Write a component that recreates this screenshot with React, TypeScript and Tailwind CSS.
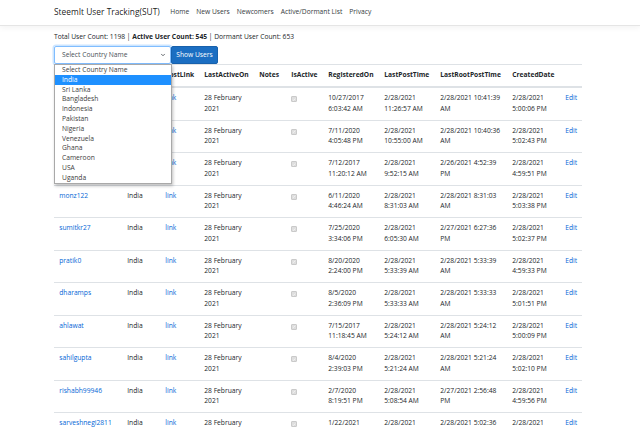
import { ChevronDown } from 'lucide-react';

type Row = {
  name: string;
  registered: string;
  lastPost: string;
  lastRoot: string;
  created: string;
};

const rows: Row[] = [
  { name: 'amitsharma', registered: '10/27/2017 6:03:42 AM', lastPost: '2/28/2021 11:26:57 AM', lastRoot: '2/28/2021 10:41:39 AM', created: '2/28/2021 5:00:06 PM' },
  { name: 'bhattg', registered: '7/11/2020 4:05:48 PM', lastPost: '2/28/2021 10:55:00 AM', lastRoot: '2/28/2021 10:40:36 AM', created: '2/28/2021 5:02:43 PM' },
  { name: 'rajeshkr', registered: '7/12/2017 11:20:12 AM', lastPost: '2/28/2021 9:52:15 AM', lastRoot: '2/26/2021 4:52:39 PM', created: '2/28/2021 4:59:51 PM' },
  { name: 'monz122', registered: '6/11/2020 4:46:24 AM', lastPost: '2/28/2021 8:31:03 AM', lastRoot: '2/28/2021 8:31:03 AM', created: '2/28/2021 5:03:38 PM' },
  { name: 'sumitkr27', registered: '7/25/2020 3:34:06 PM', lastPost: '2/28/2021 6:05:30 AM', lastRoot: '2/27/2021 6:27:36 PM', created: '2/28/2021 5:02:37 PM' },
  { name: 'pratik0', registered: '8/20/2020 2:24:00 PM', lastPost: '2/28/2021 5:33:39 AM', lastRoot: '2/28/2021 5:33:39 AM', created: '2/28/2021 4:59:33 PM' },
  { name: 'dharamps', registered: '8/5/2020 2:36:09 PM', lastPost: '2/28/2021 5:33:33 AM', lastRoot: '2/28/2021 5:33:33 AM', created: '2/28/2021 5:01:51 PM' },
  { name: 'ahlawat', registered: '7/15/2017 11:18:45 AM', lastPost: '2/28/2021 5:24:12 AM', lastRoot: '2/28/2021 5:24:12 AM', created: '2/28/2021 5:00:09 PM' },
  { name: 'sahilgupta', registered: '8/4/2020 2:39:03 PM', lastPost: '2/28/2021 5:21:24 AM', lastRoot: '2/28/2021 5:21:24 AM', created: '2/28/2021 5:02:10 PM' },
  { name: 'rishabh99946', registered: '2/7/2020 8:19:51 PM', lastPost: '2/28/2021 5:08:54 AM', lastRoot: '2/27/2021 2:56:48 PM', created: '2/28/2021 4:59:56 PM' },
  { name: 'sarveshnegi2811', registered: '1/22/2021 3:12:40 PM', lastPost: '2/28/2021 5:02:36 AM', lastRoot: '2/28/2021 5:02:36 AM', created: '2/28/2021 5:01:18 PM' },
];

const countries = [
  'Select Country Name',
  'India',
  'Sri Lanka',
  'Bangladesh',
  'Indonesia',
  'Pakistan',
  'Nigeria',
  'Venezuela',
  'Ghana',
  'Cameroon',
  'USA',
  'Uganda',
];

const navLinks = ['Home', 'New Users', 'Newcomers', 'Active/Dormant List', 'Privacy'];

const headers = [
  'UserName',
  'Country',
  'PostLink',
  'LastActiveOn',
  'Notes',
  'IsActive',
  'RegisteredOn',
  'LastPostTime',
  'LastRootPostTime',
  'CreatedDate',
  '',
];

const widths = [68, 38, 39, 55, 32, 37, 56, 56, 72, 53, 22];

function Checkbox() {
  return (
    <span className="mt-[3px] flex h-[6px] w-[6px] items-center justify-center rounded-[1px] border border-[#cacaca] bg-[#dedede]">
      <svg viewBox="0 0 10 10" className="h-[5px] w-[5px]">
        <path d="M2 5.2 4.2 7.3 8 2.8" fill="none" stroke="#fafafa" strokeWidth="1.8" />
      </svg>
    </span>
  );
}

export default function App() {
  return (
    <div className="min-h-screen bg-white text-[#212529]" style={{ fontFamily: '"Open Sans", "Noto Sans", sans-serif' }}>
      <nav className="flex h-[26px] items-center border-b border-[#e5e5e5] bg-white pl-[54px] shadow-[0_2px_6px_rgba(0,0,0,0.05)]">
        <span className="mr-[7px] text-[8.4px] text-black/90">SteemIt User Tracking(SUT)</span>
        <ul className="flex">
          {navLinks.map((l) => (
            <li key={l} className="px-[3.5px] text-[6.7px] text-[#343a40]">
              {l}
            </li>
          ))}
        </ul>
      </nav>

      <main className="ml-[54px] w-[528px] pt-[6px]">
        <p className="text-[6.7px] leading-[10.5px]">
          Total User Count: 1198 | <b>Active User Count: 545</b> | Dormant User Count: 653
        </p>

        <div className="relative mt-[3.5px] flex">
          <div className="flex h-[18px] w-[117px] items-center justify-between rounded-[2px] border border-[#80bdff] pl-[7px] pr-[4px] text-[6.7px] text-[#495057] shadow-[0_0_0_1.5px_rgba(0,123,255,0.2)]">
            <span>Select Country Name</span>
            <ChevronDown size={6} strokeWidth={3} className="text-[#343a40]" />
          </div>
          <button className="h-[18px] w-[47px] rounded-[2px] border border-[#1861ac] bg-[#1b6ec2] text-[6.7px] text-white">
            Show Users
          </button>

          <ul className="absolute left-0 top-[18px] z-10 w-[118px] border border-[#a9a9a9] bg-white text-[6.7px] leading-[9.8px] shadow-[1px_2px_3px_rgba(0,0,0,0.25)]">
            {countries.map((c) => (
              <li key={c} className={c === 'India' ? 'bg-[#1e90ff] pl-[7px] text-white' : 'pl-[7px] text-[#3c3c3c]'}>
                {c}
              </li>
            ))}
          </ul>
        </div>

        <table className="w-[528px] table-fixed border-collapse text-[6.7px] leading-[10.5px]">
          <colgroup>
            {widths.map((w, i) => (
              <col key={i} style={{ width: w }} />
            ))}
          </colgroup>
          <thead>
            <tr>
              {headers.map((h, i) => (
                <th key={i} className="border-t border-b-2 border-[#dee2e6] px-[5.25px] py-[5.25px] text-left font-bold whitespace-nowrap">
                  {h}
                </th>
              ))}
            </tr>
          </thead>
          <tbody>
            {rows.map((r) => (
              <tr key={r.name} className="border-b border-[#dee2e6] align-top">
                <td className="px-[5.25px] py-[5.25px] text-[#0366d6]">{r.name}</td>
                <td className="px-[5.25px] py-[5.25px]">India</td>
                <td className="px-[5.25px] py-[5.25px] text-[#0366d6]">link</td>
                <td className="px-[5.25px] py-[5.25px]">28 February 2021</td>
                <td className="px-[5.25px] py-[5.25px]"></td>
                <td className="px-[5.25px] py-[5.25px]">
                  <Checkbox />
                </td>
                <td className="px-[5.25px] py-[5.25px]">{r.registered}</td>
                <td className="px-[5.25px] py-[5.25px]">{r.lastPost}</td>
                <td className="px-[5.25px] py-[5.25px]">{r.lastRoot}</td>
                <td className="px-[5.25px] py-[5.25px]">{r.created}</td>
                <td className="px-[5.25px] py-[5.25px] text-[#0366d6]">Edit</td>
              </tr>
            ))}
          </tbody>
        </table>
      </main>
    </div>
  );
}
